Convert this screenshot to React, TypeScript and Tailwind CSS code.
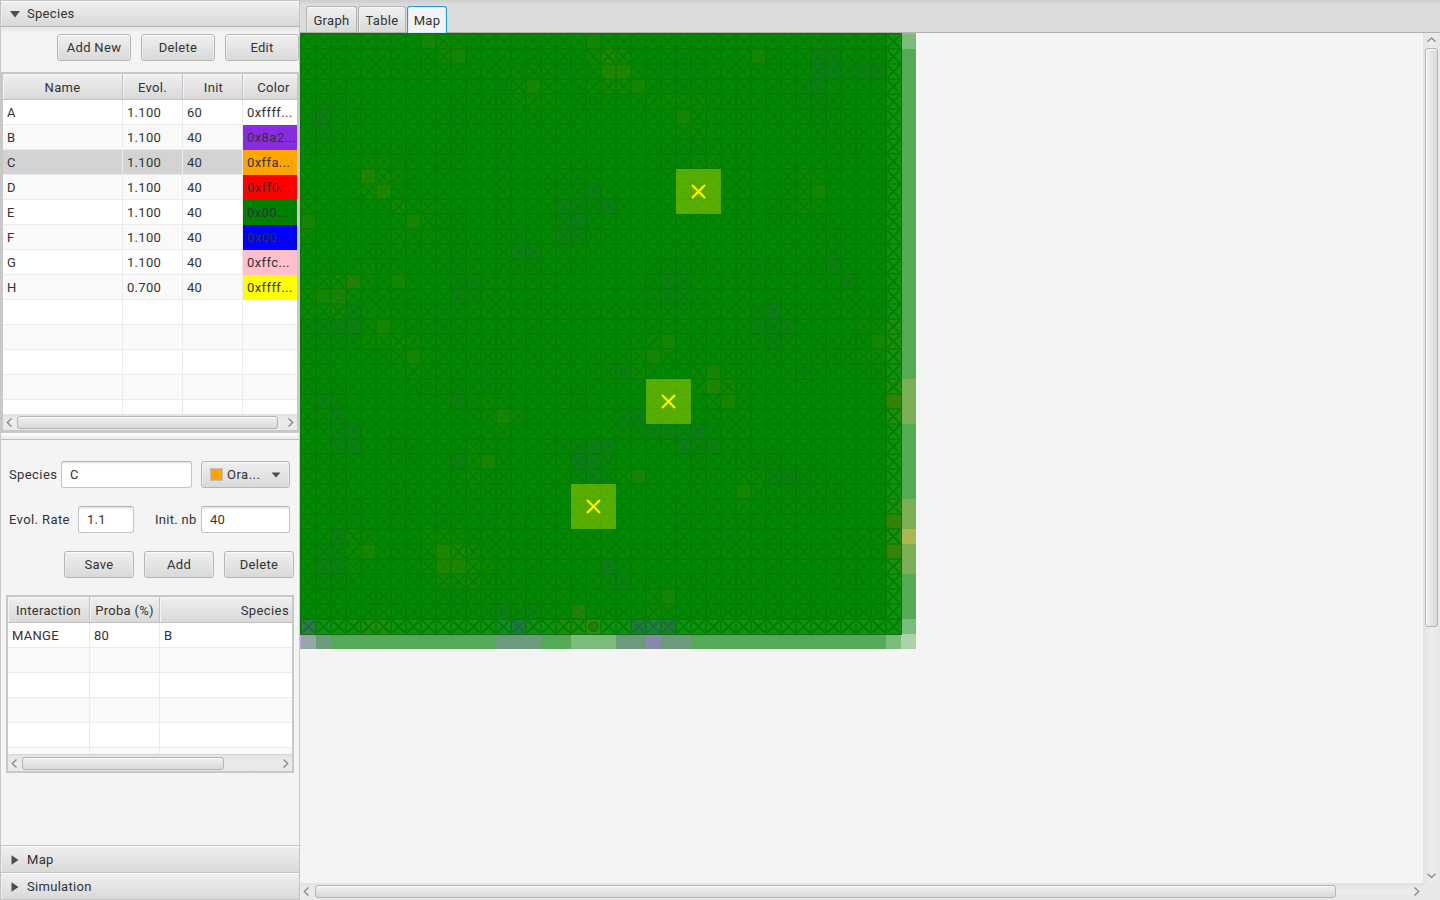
import React from "react";

const GRAD = "bg-gradient-to-b from-[#f0f0f0] to-[#d9d9d9]";

function Button({ children, className = "" }: { children: React.ReactNode; className?: string }) {
  return (
    <button
      className={`flex h-[27px] shrink-0 items-center justify-center rounded-[3px] border border-[#b5b5b5] shadow-[inset_0_1px_0_#fafafa,inset_1px_0_0_#ececec,inset_-1px_0_0_#ececec] ${GRAD} ${className}`}
    >
      {children}
    </button>
  );
}

function Field({ value, className = "" }: { value: string; className?: string }) {
  return (
    <div
      className={`flex h-[27px] shrink-0 items-center rounded-[3px] border border-[#c4c4c4] border-t-[#b4b4b4] bg-white pl-2 shadow-[inset_0_2px_2px_-1px_#dedede] ${className}`}
    >
      {value}
    </div>
  );
}

function Chevron({ dir }: { dir: "left" | "right" | "up" | "down" }) {
  const points = {
    left: "8.5,4.5 4.3,8.5 8.5,12.5",
    right: "5.5,4.5 9.7,8.5 5.5,12.5",
    up: "4.5,8.7 8.5,5 12.5,8.7",
    down: "4.5,4.8 8.5,8.5 12.5,4.8",
  }[dir];
  const wide = dir === "up" || dir === "down";
  return (
    <svg width={wide ? 17 : 14} height={wide ? 14 : 17} className="shrink-0">
      <polyline points={points} fill="none" stroke="#8c8c8c" strokeWidth="1.4" />
    </svg>
  );
}

function HScroll({ thumb, className = "" }: { thumb: string; className?: string }) {
  return (
    <div
      className={`flex w-full shrink-0 items-center bg-gradient-to-b from-[#e3e3e3] via-[#ececec] to-[#e8e8e8] ${className}`}
    >
      <Chevron dir="left" />
      <div
        className={`h-[13px] rounded-[3px] border border-[#b4b4b4] shadow-[inset_0_1px_0_#fafafa] ${GRAD} ${thumb}`}
      />
      <div className="flex-1" />
      <Chevron dir="right" />
    </div>
  );
}

function HeaderCell({ label, className }: { label: string; className: string }) {
  return (
    <div
      className={`flex h-[26px] shrink-0 items-center border-b border-[#c2c2c2] pt-[2px] shadow-[inset_1px_1px_0_#f5f5f5] ${GRAD} ${className}`}
    >
      {label}
    </div>
  );
}

function Title({ label, open, className }: { label: string; open?: boolean; className: string }) {
  return (
    <div
      className={`flex w-full shrink-0 items-center border border-[#c4c4c4] pl-[9px] shadow-[inset_0_1px_0_#fafafa,inset_1px_0_0_#ededed] ${GRAD} ${className}`}
    >
      <svg width="11" height="10" className="mr-[6px]">
        {open ? <polygon points="0,2 10,2 5,8.5" fill="#4d4d4d" /> : <polygon points="1.5,0.3 8.5,5 1.5,9.7" fill="#4d4d4d" />}
      </svg>
      {label}
    </div>
  );
}

const species = [
  ["A", "1.100", "60", "0xffff...", "bg-white"],
  ["B", "1.100", "40", "0x8a2...", "bg-[#8a2be2]"],
  ["C", "1.100", "40", "0xffa...", "bg-[#ffa500]"],
  ["D", "1.100", "40", "0xff0...", "bg-[#ff0000]"],
  ["E", "1.100", "40", "0x00...", "bg-[#008000]"],
  ["F", "1.100", "40", "0x00...", "bg-[#0000ff]"],
  ["G", "1.100", "40", "0xffc...", "bg-[#ffc0cb]"],
  ["H", "0.700", "40", "0xffff...", "bg-[#ffff00]"],
  ["", "", "", "", ""],
  ["", "", "", "", ""],
  ["", "", "", "", ""],
  ["", "", "", "", ""],
  ["", "", "", "", ""],
];

const cellBase = "h-full shrink-0 flex items-center pl-1 pt-[2px] border-r border-[#ebebeb]";

function SpeciesTable() {
  return (
    <div className="flex h-[361px] w-[298px] shrink-0 flex-col overflow-hidden border-2 border-[#c8c8c8] border-b-[3px]">
      <div className="flex shrink-0">
        <HeaderCell label="Name" className="w-[120px] justify-center border-r" />
        <HeaderCell label="Evol." className="w-[60px] justify-center border-r" />
        <HeaderCell label="Init" className="w-[60px] justify-center border-r pl-[2px]" />
        <HeaderCell label="Color" className="w-[61px] justify-center" />
      </div>
      <div className="flex min-h-0 flex-1 flex-col overflow-hidden bg-white">
        {species.map((row, i) => (
          <div
            key={i}
            className={`flex h-[25px] shrink-0 ${i === 2 ? "bg-[#d3d3d3]" : i % 2 ? "bg-[#f9f9f9]" : "bg-white"}`}
          >
            <div className={`${cellBase} w-[120px] border-b`}>{row[0]}</div>
            <div className={`${cellBase} w-[60px] border-b`}>{row[1]}</div>
            <div className={`${cellBase} w-[60px] border-b`}>{row[2]}</div>
            <div
              className={`flex flex-1 items-center overflow-hidden whitespace-nowrap pl-1 tracking-[0.4px] ${
                row[0] ? row[4] : "border-b border-[#ebebeb]"
              }`}
            >
              {row[3]}
            </div>
          </div>
        ))}
      </div>
      <HScroll thumb="w-[261px]" className="h-[16px]" />
    </div>
  );
}

function InteractionTable() {
  const rows = [["MANGE", "80", "B"], ["", "", ""], ["", "", ""], ["", "", ""], ["", "", ""], ["", "", ""]];
  return (
    <div className="ml-[5px] mt-[17px] flex h-[178px] w-[288px] shrink-0 flex-col overflow-hidden border-2 border-[#c8c8c8]">
      <div className="flex shrink-0">
        <HeaderCell label="Interaction" className="w-[82px] justify-center border-r" />
        <HeaderCell label="Proba (%)" className="w-[70px] justify-center border-r" />
        <HeaderCell label="Species" className="w-[132px] justify-end pr-[3px] tracking-[0.4px]" />
      </div>
      <div className="flex min-h-0 flex-1 flex-col overflow-hidden bg-white">
        {rows.map((r, i) => (
          <div key={i} className={`flex h-[25px] shrink-0 ${i % 2 ? "bg-[#f9f9f9]" : "bg-white"}`}>
            <div className={`${cellBase} w-[82px] border-b`}>{r[0]}</div>
            <div className={`${cellBase} w-[70px] border-b`}>{r[1]}</div>
            <div className="flex flex-1 items-center border-b border-[#ebebeb] pl-1 pt-[2px]">{r[2]}</div>
          </div>
        ))}
      </div>
      <HScroll thumb="w-[202px]" className="h-[17px] border-t border-[#d5d5d5]" />
    </div>
  );
}

const TERRAIN: string[] = [
  "2b1 5b1 8y2 9y2x 10y1 18y1 19y2 34y1x 35b1",
  "9y2x 10y2 19y2x 20y3x 21y2x 25b1 30y2 34b2 35b2 37b1",
  "14y1x 15y1x 16y1x 17b1 20y3 21y3 22y1x 24b1 25b1 26b1 34b4x 35b2 36b2x 37b2 38b2",
  "13o1 14y1x 15y2 16y1x 19y1x 20y2x 21y2x 22y2 25b1 33b1 34b2",
  "1b1 2b1 14y1x 15y1 16y1 19o1 23y1 24y1 25y1 26y1 33b1 34b2x 35b1x",
  "0b1 1b4x 2b1 3b1 10b1 25y2 26y1x 34b1",
  "0b1 1b2x 2b1 25y1x 26y1x 35b1",
  "0b1 1b1 25b1 26b1 36b1",
  "4y1 5y1 6b1 9b1 13b1 24b1 25b1 26y1 27y1",
  "4y3 5y2x 6y1 18b1 33y1 34y1",
  "4y2x 5y3 17b1 18b1x 19b2 33y1 34y2",
  "0y1x 6y2x 8y1 17b2 18b2x 19b2x 20b2 32b1 33y1 34y1",
  "0y2 7y2 8y1x 9b1 17b2x 18b3 19b1x",
  "0y1 6y1 8y1 14b1 17b2 18b2 35b1",
  "5b1 10b1 14b2 15b2 17b1 25b1 35b1",
  "4y1 10b1 14b1 15b1 24b1 25b1 30b1 35b2",
  "1y1x 2y2x 3r1 4y1 6y2 10b1 11b2 23b1 24b2 25b2x 36b2",
  "0y1 1y2 2o3 3y1x 10b2 11b1 23b1 24b2 25b2x 26b1",
  "0y1 1y1x 2r1x 3b3x 4y1 9b1 10b1 25b1 30b1 31b3 38b1",
  "0b2x 1b2x 2b2 3b3 4y1x 5y2 9b1 30b2 31b2x 32b2 37y1 38y1 39r2x",
  "0b1 1b1 2b1 3b1 4y1 5y1 6y2x 7y1 23y1x 24y2 31b2x 38y2 39r2x",
  "1b1 6y1 7y2 8y1 22y1 23y2 24y1x 35b1 37y1 38y1 39r2x",
  "1b1 7y1x 8y1x 12b1 20b1 21b2 22y1 26y1x 27y2 28y1x 33o1 38b1",
  "0b1 8o1 10b1 12b1 26y1x 27y3 28y2x 39r2x",
  "1b2 2b1 10b2 12y1 18b1 27y1x 28y2 39r3",
  "1b1 2b2 12y1 13y2 14y1 21b2x 22b2 39r2x",
  "2b2x 3b2 13y1 21b1 22b1 23b2 24b2 25b2x 26b3 27b1",
  "2b2 3b2 6b1 11y1 17b1 18b2x 19b2 20b2 25b3 26b2x 27b2",
  "0b1 10b2 11y1 12y2 18b4x 19b3 20b2x 26b1 30b1 31b1",
  "2b1 11y1x 18b1 19b2 20b1 21y1 22y2 29y1 30y1 31b3x 32b2 33b1",
  "6b1 29y2 32b1 33b1 35b1",
  "3b1 6b1 29y1 39r2x",
  "3b1 9b1 12b1 25b1 39r3",
  "2b2 3y2x 4y1 8y1 9y1 10y1 28b1 36b1 38y1x 39r2x",
  "1b2x 2b2x 3y2x 4y2 8y1x 9y3 10y3x 11y2x 39r3",
  "1b2 2b2 3y1 8y1x 9y3 10y3 11y2x 12y1 20b3 21b1 39r2x",
  "1b1 2b1 9y2x 10y2x 11y2x 20b1 21b2 36b1",
  "9b1 10b1 17y1 23y1 24y2",
  "5y1 12b1 13b2 14b1 15b2 18r1 23y2x 24y1x",
  "0c4 1c1x 4r2x 5r2x 13c2x 14c3 15c1x 17r2x 18r2x 19o3 21c1x 22c3 23c2 24c3",
];

const TINT: Record<string, string[]> = {
  y: ["#0c8704", "#148603", "#208602"],
  b: ["#08840b", "#0b8112", "#0e7e18", "#157825"],
  r: ["#188304", "#208c10", "#338508"],
  o: ["#087c0c", "#087c0c", "#087c0c"],
  c: ["#138d1c", "#188830", "#1b7e33", "#2c7d45"],
};

function Land() {
  const cells: React.ReactNode[] = [];
  for (let r = 0; r < 40; r++) {
    const specs = new Map<number, { kind: string; level: number; bold: boolean }>();
    TERRAIN[r].split(" ").forEach((s) => {
      const m = /^(\d+)([a-z])(\d)(x?)$/.exec(s);
      if (m) specs.set(+m[1], { kind: m[2], level: +m[3], bold: m[4] === "x" });
    });
    for (let c = 0; c < 40; c++) {
      const edge = r === 39 || c === 39;
      const s = specs.get(c);
      const x = 1 + c * 15;
      const y = 1 + r * 15;
      let fill = edge ? "#119111" : "#058805";
      if (s && s.kind !== "o") fill = TINT[s.kind][s.level - 1];
      else if (s && s.level > 2) fill = edge ? "#2a8f12" : "#1b8606";
      cells.push(<rect key={`f${r}-${c}`} x={x} y={y} width="15" height="15" fill={fill} />);
      if (s && s.kind === "o") {
        cells.push(<circle key={`o${r}-${c}`} cx={x + 7.5} cy={y + 7.5} r="5.5" fill={s.level > 2 ? "#187a0c" : "#067d0a"} />);
        cells.push(<circle key={`p${r}-${c}`} cx={x + 7.5} cy={y + 7.5} r="3.5" fill={s.level > 2 ? "#20800c" : "#08800c"} />);
      } else {
        let stroke = "#008000";
        if (s && !s.bold) {
          if (s.kind === "c") stroke = "#1d6b40";
          else if (s.kind === "r") stroke = "#3a7c06";
          else if (s.kind === "y" && s.level > 1) stroke = "#188203";
          else if (s.kind === "b" && s.level > 1) stroke = "#0a7a14";
        }
        const strong = edge || (s && s.bold);
        cells.push(
          <path
            key={`x${r}-${c}`}
            d={`M${x + 1.5} ${y + 1.5}l12 12m0-12l-12 12`}
            stroke={stroke}
            strokeWidth={strong ? 1.8 : 1.7}
            opacity={strong ? 1 : 0.9}
          />
        );
      }
    }
  }
  return <g>{cells}</g>;
}

const RIGHT_STRIP: [number, number, string][] = [
  [0, 1, "#7bbb7b"], [1, 22, "#55aa55"], [23, 3, "#7bae55"], [26, 5, "#55aa55"], [31, 2, "#7bae55"],
  [33, 1, "#b0b554"], [34, 2, "#7bae55"], [36, 3, "#55aa55"], [39, 1, "#7bbb7b"], [40, 1, "#abd2ab"],
];
const BOTTOM_STRIP: [number, number, string][] = [
  [0, 1, "#93a6a8"], [1, 1, "#6b9b7b"], [2, 11, "#55aa55"], [13, 3, "#6b9b7b"], [16, 2, "#55aa55"],
  [18, 3, "#7bbb7b"], [21, 2, "#6b9b7b"], [23, 1, "#8888a8"], [24, 2, "#6b9b7b"], [26, 13, "#55aa55"],
  [39, 1, "#7bbb7b"],
];
const MARKERS = [[25, 9], [23, 23], [18, 30]];

function MapView() {
  const lines = Array.from({ length: 40 }, (_, i) => i);
  return (
    <svg width="616" height="616" viewBox="0 0 616 616" className="block shrink-0">
      <rect width="602" height="602" fill="#058005" />
      <Land />
      <g stroke="#007a00" strokeWidth="2" opacity="0.6" shapeRendering="crispEdges">
        {lines.map((i) => (
          <path key={i} d={`M${1 + i * 15} 0v602M0 ${1 + i * 15}h602`} />
        ))}
      </g>
      <path d="M586 0v586M0 586h586" stroke="#0a6a0a" strokeWidth="1" opacity="0.35" />
      <g shapeRendering="crispEdges">
        {RIGHT_STRIP.map(([r, n, f]) => (
          <rect key={r} x="601" y={1 + r * 15} width="15" height={n * 15} fill={f} />
        ))}
        <rect x="601" y="0" width="15" height="1" fill="#8fc58f" />
        {BOTTOM_STRIP.map(([c, n, f]) => (
          <rect key={c} x={1 + c * 15} y="601" width={n * 15} height="15" fill={f} />
        ))}
        <rect x="0" y="601" width="1" height="15" fill="#c7a0ec" />
        <path d="M601.5 0v602M0 601.5h602" stroke="#0d660d" strokeWidth="1" opacity="0.9" />
      </g>
      {MARKERS.map(([c, r]) => {
        const x = 1 + c * 15;
        const y = 1 + r * 15;
        return (
          <g key={c}>
            <rect x={x} y={y} width="45" height="45" fill="#ffff00" opacity="0.333" />
            <path d={`M${x + 16} ${y + 16}l13 13m0-13l-13 13`} stroke="#ffff00" strokeWidth="2" />
          </g>
        );
      })}
    </svg>
  );
}

function Tab({ label, active, className }: { label: string; active?: boolean; className: string }) {
  return (
    <div
      className={`flex shrink-0 items-center justify-center rounded-t-[3px] border border-b-0 ${
        active
          ? "h-[27px] border-[#1aa2cf] bg-[#f4f4f4] pt-px shadow-[inset_0_0_0_1px_#d5edf6]"
          : `h-[26px] border-[#b3b3b3] pt-[3px] shadow-[inset_0_1px_0_#fafafa,inset_1px_0_0_#ececec] ${GRAD}`
      } ${className}`}
    >
      {label}
    </div>
  );
}

export default function App() {
  return (
    <div className="flex h-[900px] w-[1440px] overflow-hidden bg-[#f4f4f4] font-['Roboto',sans-serif] text-[13px] leading-[16px] tracking-[0.3px] text-[#323232]">
      <aside className="flex w-[300px] shrink-0 flex-col">
        <Title label="Species" open className="h-[27px] border-b-[#b5b5b5]" />
        <div className="flex min-h-0 flex-1 flex-col overflow-hidden border-x border-[#c8c8c8]">
          <div className="flex h-[45px] shrink-0 gap-[10px] bg-gradient-to-b from-[#e6e6e6] to-[#f4f4f4] to-[6px] pl-[56px] pt-[7px]">
            <Button className="w-[74px]">Add New</Button>
            <Button className="w-[74px]">Delete</Button>
            <Button className="w-[74px]">Edit</Button>
          </div>
          <SpeciesTable />
          <div className="h-[7px] shrink-0 border-b border-[#c0c0c0] bg-gradient-to-b from-white to-[#e9e9e9]" />
          <div className="flex shrink-0 items-center pl-2 pt-[21px]">
            <span className="w-[52px] tracking-[0.4px]">Species</span>
            <Field value="C" className="w-[131px]" />
            <Button className="ml-[9px] w-[89px] !justify-start pl-2">
              <span className="mr-[4px] h-[13px] w-[13px] border border-[#bfbfbf] bg-[#ffa500]" />
              <span className="w-[43px] text-left tracking-[0.5px]">Ora...</span>
              <svg width="10" height="6" className="ml-[1px]">
                <polygon points="0.5,0.5 9.5,0.5 5,5.5" fill="#4d4d4d" />
              </svg>
            </Button>
          </div>
          <div className="flex shrink-0 items-center pl-2 pt-[18px]">
            <span className="w-[69px] tracking-[0.4px]">Evol. Rate</span>
            <Field value="1.1" className="w-[56px]" />
            <span className="ml-[21px] w-[46px] whitespace-nowrap">Init. nb</span>
            <Field value="40" className="w-[89px]" />
          </div>
          <div className="flex shrink-0 justify-end gap-[10px] pr-[5px] pt-[18px]">
            <Button className="w-[70px]">Save</Button>
            <Button className="w-[70px]">Add</Button>
            <Button className="w-[70px]">Delete</Button>
          </div>
          <InteractionTable />
        </div>
        <Title label="Map" className="h-[27px] border-b-0 pt-[2px]" />
        <Title label="Simulation" className="h-[28px] pt-[2px]" />
      </aside>

      <main className="flex min-w-0 flex-1 flex-col">
        <div className="flex h-[33px] shrink-0 items-end gap-px border-b border-[#b1b1b1] bg-gradient-to-b from-[#cdcdcd] to-[#dcdcdc] to-[5px] pl-[6px]">
          <Tab label="Graph" className="w-[51px]" />
          <Tab label="Table" className="w-[48px]" />
          <Tab label="Map" active className="-mb-px w-[40px]" />
        </div>
        <div className="flex min-h-0 flex-1">
          <div className="min-w-0 flex-1 overflow-hidden">
            <MapView />
          </div>
          <div className="flex w-[17px] shrink-0 flex-col items-center bg-gradient-to-r from-[#e3e3e3] via-[#ececec] to-[#e8e8e8]">
            <Chevron dir="up" />
            <div className="mt-px h-[579px] w-[13px] shrink-0 rounded-[3px] border border-[#b4b4b4] bg-gradient-to-r from-[#f0f0f0] to-[#d9d9d9] shadow-[inset_1px_1px_0_#fafafa]" />
            <div className="flex-1" />
            <Chevron dir="down" />
          </div>
        </div>
        <div className="flex h-[17px] shrink-0">
          <HScroll thumb="w-[1021px] ml-px" className="h-[17px] !w-[1123px]" />
          <div className="flex-1 bg-[#e8e8e8]" />
        </div>
      </main>
    </div>
  );
}
